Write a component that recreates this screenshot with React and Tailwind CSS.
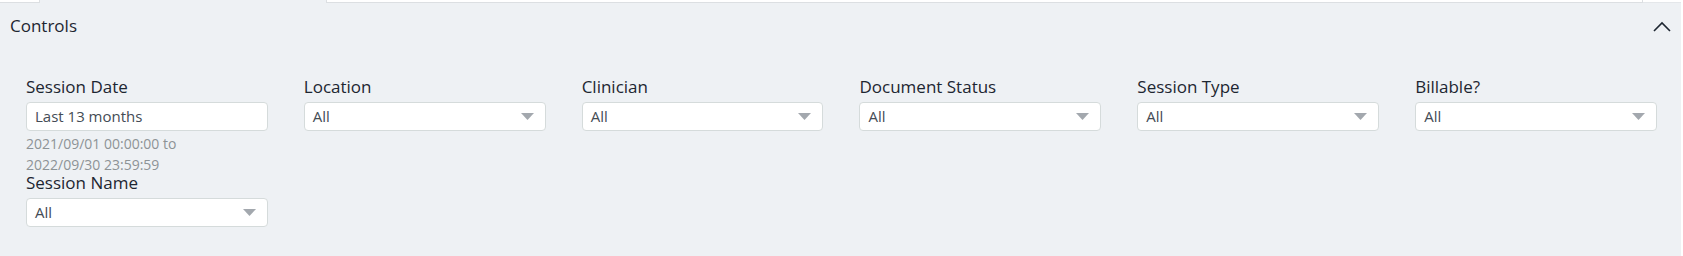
const filters = [
    { label: "Session Date", value: "Last 13 months", dropdown: false, hint: ["2021/09/01 00:00:00 to", "2022/09/30 23:59:59"] },
    { label: "Location", value: "All", dropdown: true },
    { label: "Clinician", value: "All", dropdown: true },
    { label: "Document Status", value: "All", dropdown: true },
    { label: "Session Type", value: "All", dropdown: true },
    { label: "Billable?", value: "All", dropdown: true },
    { label: "Session Name", value: "All", dropdown: true },
];

const Caret = () => (
    <svg width="13" height="7" viewBox="0 0 13 7" className="shrink-0">
        <polygon points="0,0 13,0 6.5,7" fill="#a3a8ae" />
    </svg>
);

const Control = ({ label, value, dropdown, hint }) => {
    return (
        <div className="flex flex-col">
            <div className="text-[17px] leading-[16px] text-[#1d2631]">{label}</div>
            <div className="mt-[7px] h-[29px] flex items-center justify-between bg-white border border-[#d5dbdb] rounded-[4px] pl-[8px] pr-[11px]">
                <span className="text-[15px] text-[#444c55]">{value}</span>
                {dropdown && <Caret />}
            </div>
            {hint && (
                <div className="mt-[2px] text-[14px] leading-[21px] text-[#8d9396]">
                    {hint.map((line) => (
                        <div key={line}>{line}</div>
                    ))}
                </div>
            )}
        </div>
    );
};

export default function App() {
    return (
        <div className="w-[1683px] h-[256px] flex bg-white overflow-hidden" style={{ fontFamily: '"Open Sans", "Noto Sans", sans-serif' }}>
            <div className="w-[1681px] bg-[#eef1f4]">
                {/* edges of the cards above */}
                <div className="h-[3px] flex">
                    <div className="w-[40px] bg-white border-r border-b border-[#dcdfe2]" />
                    <div className="w-[286px]" />
                    <div className="w-[1317px] bg-white border-l border-r border-b border-[#dcdfe2]" />
                    <div className="flex-1 bg-white border-b border-[#e4e7ea]" />
                </div>

                {/* Header */}
                <div className="h-[46px] flex items-center justify-between pl-[10px] pr-[10px]">
                    <span className="text-[17px] text-[#1d2631]">Controls</span>
                    <svg width="18" height="11" viewBox="0 0 18 11">
                        <polyline points="1,10 9,2 17,10" fill="none" stroke="#1d2631" strokeWidth="1.6" />
                    </svg>
                </div>

                {/* Controls grid */}
                <div className="grid grid-cols-6 gap-x-[36px] pl-[26px] pr-[24px] pt-[30px]">
                    {filters.map((f) => (
                        <Control key={f.label} {...f} />
                    ))}
                </div>
            </div>
        </div>
    );
}
